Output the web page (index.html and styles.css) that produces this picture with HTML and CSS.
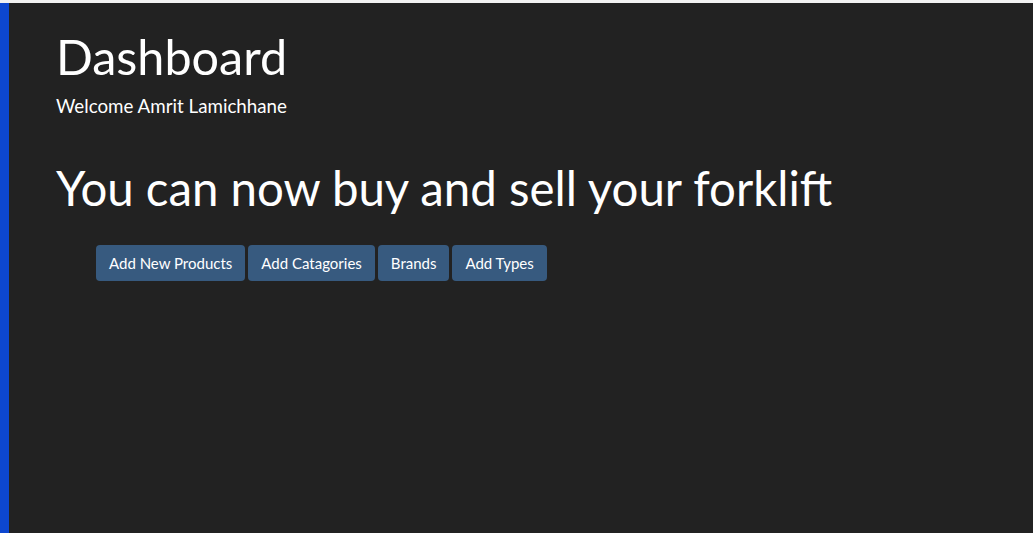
FILE: index.html
```html
<!DOCTYPE html>
<html>
<head>
<meta charset="utf-8">
<link rel="stylesheet" href="styles.css">
</head>
<body>
<div class="topline"></div>
<div class="layout">
  <aside class="sidebar"></aside>
  <main class="main">
    <h1 class="title">Dashboard</h1>
    <p class="welcome">Welcome Amrit Lamichhane</p>
    <h2 class="headline">You can now buy and sell your forklift</h2>
    <div class="actions">
      <a class="btn">Add New Products</a>
      <a class="btn">Add Catagories</a>
      <a class="btn">Brands</a>
      <a class="btn">Add Types</a>
    </div>
  </main>
</div>
</body>
</html>
```
FILE: styles.css
```css
html, body {
  margin: 0;
  padding: 0;
  height: 100%;
}
body {
  background: #222222;
  color: #ffffff;
  font-family: Lato, "Open Sans", sans-serif;
  display: flex;
  flex-direction: column;
}
.topline {
  height: 3px;
  background: #f2f2f2;
  flex: none;
}
.layout {
  flex: 1;
  display: flex;
}
.sidebar {
  width: 9px;
  background: #0d47d0;
  flex: none;
}
.main {
  flex: 1;
  padding-left: 47px;
}
.title {
  font-size: 48.5px;
  font-weight: 400;
  line-height: 1.1;
  margin: 27px 0 0;
}
.welcome {
  font-size: 18.75px;
  margin: 12px 0 0;
  line-height: 1.2;
}
.headline {
  font-size: 47.4px;
  font-weight: 400;
  line-height: 1.1;
  margin: 44px 0 0;
}
.actions {
  display: flex;
  gap: 3px;
  margin: 31px 0 0 40px;
}
.btn {
  background: #375a7f;
  color: #ffffff;
  font-size: 15px;
  height: 36px;
  line-height: 36px;
  padding: 0 13px;
  border-radius: 4px;
  cursor: pointer;
}
```
